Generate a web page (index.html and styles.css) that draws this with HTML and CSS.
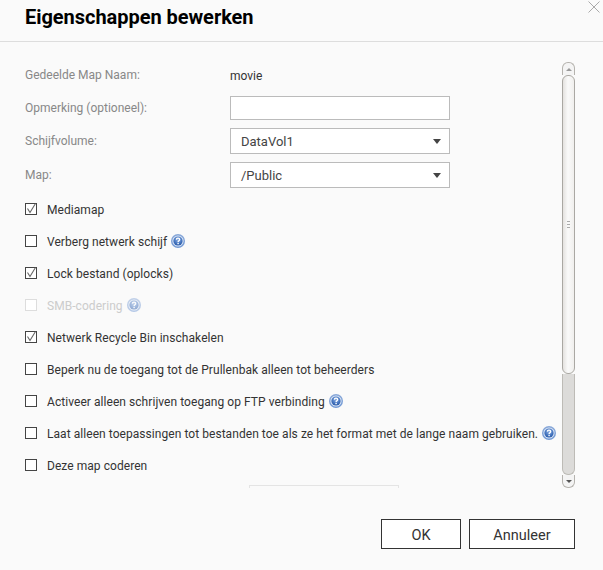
FILE: index.html
```html
<!DOCTYPE html>
<html lang="nl">
<head>
<meta charset="utf-8">
<title>Eigenschappen bewerken</title>
<link rel="stylesheet" href="styles.css">
</head>
<body>
<svg class="defs" width="0" height="0" aria-hidden="true">
  <defs>
    <radialGradient id="helpfill" cx="50%" cy="35%" r="65%">
      <stop offset="0" stop-color="#8fb0e2"/>
      <stop offset="0.7" stop-color="#3f70bc"/>
      <stop offset="1" stop-color="#2c5aa5"/>
    </radialGradient>
    <linearGradient id="helpring" x1="0" y1="0" x2="0" y2="1">
      <stop offset="0" stop-color="#8aa9d8"/>
      <stop offset="1" stop-color="#6f97d4"/>
    </linearGradient>
    <symbol id="help" viewBox="0 0 14 14">
      <circle cx="7" cy="7" r="7" fill="url(#helpring)"/>
      <circle cx="7" cy="7" r="5.6" fill="#dbe6f6"/>
      <circle cx="7" cy="7" r="4.6" fill="url(#helpfill)"/>
      <path d="M5.300 5.600C5.400 4.600 6.100 4.100 7 4.100c1 0 1.700.6 1.700 1.400 0 1.200-1.600 1.300-1.600 2.500" fill="none" stroke="#fff" stroke-width="1.300"/>
      <rect x="6.400" y="8.800" width="1.400" height="1.400" fill="#fff"/>
    </symbol>
    <symbol id="check" viewBox="0 0 12 12">
      <path d="M2.500 5.500 5 9.500 10.500 0.500" fill="none" stroke="#666" stroke-width="1.100"/>
    </symbol>
  </defs>
</svg>
<div class="dialog">
  <header class="head">
    <h1 class="title">Eigenschappen bewerken</h1>
    <svg class="close" width="12" height="12" viewBox="0 0 12 12" aria-label="Sluiten"><path d="M.5.5l11 11M11.500.5l-11 11" stroke="#aaa" stroke-width="1" fill="none"/></svg>
  </header>
  <main class="main">
    <div class="content">
      <div class="fields">
        <div class="field field-text"><span class="label">Gedeelde Map Naam:</span><span class="value">movie</span></div>
        <div class="field"><span class="label">Opmerking (optioneel):</span><span class="control control-input"></span></div>
        <div class="field"><span class="label">Schijfvolume:</span><span class="control control-select">DataVol1<i class="caret"></i></span></div>
        <div class="field"><span class="label">Map:</span><span class="control control-select">/Public<i class="caret"></i></span></div>
      </div>
      <ul class="options">
        <li class="option"><span class="box"><svg width="12" height="12"><use href="#check"/></svg></span><span class="text">Mediamap</span></li>
        <li class="option"><span class="box"></span><span class="text">Verberg netwerk schijf</span><svg class="help" width="14" height="14"><use href="#help"/></svg></li>
        <li class="option"><span class="box"><svg width="12" height="12"><use href="#check"/></svg></span><span class="text">Lock bestand (oplocks)</span></li>
        <li class="option option-off"><span class="box"></span><span class="text">SMB-codering</span><svg class="help" width="14" height="14"><use href="#help"/></svg></li>
        <li class="option"><span class="box"><svg width="12" height="12"><use href="#check"/></svg></span><span class="text">Netwerk Recycle Bin inschakelen</span></li>
        <li class="option"><span class="box"></span><span class="text">Beperk nu de toegang tot de Prullenbak alleen tot beheerders</span></li>
        <li class="option"><span class="box"></span><span class="text">Activeer alleen schrijven toegang op FTP verbinding</span><svg class="help" width="14" height="14"><use href="#help"/></svg></li>
        <li class="option"><span class="box"></span><span class="text">Laat alleen toepassingen tot bestanden toe als ze het format met de lange naam gebruiken.</span><svg class="help" width="14" height="14"><use href="#help"/></svg></li>
        <li class="option"><span class="box"></span><span class="text">Deze map coderen</span></li>
      </ul>
      <div class="peek"></div>
    </div>
    <div class="scrollbar" aria-hidden="true">
      <div class="sb-btn sb-up"><i class="sb-arrow-up"></i></div>
      <div class="sb-thumb"><i class="sb-grip"></i></div>
      <div class="sb-track"></div>
      <div class="sb-btn sb-down"><i class="sb-arrow-down"></i></div>
    </div>
  </main>
  <footer class="foot">
    <button class="btn btn-ok" type="button">OK</button>
    <button class="btn btn-cancel" type="button">Annuleer</button>
  </footer>
</div>
</body>
</html>
```
FILE: styles.css
```css
* { box-sizing: border-box; }
html, body { margin: 0; padding: 0; }
body {
  width: 603px;
  height: 570px;
  overflow: hidden;
  background: #fafafa;
  font-family: Roboto, "Liberation Sans", sans-serif;
  font-size: 12px;
  color: #333;
}
.defs { position: absolute; }
.dialog { display: flex; flex-direction: column; height: 570px; }

.head {
  position: relative;
  height: 42px;
  border-bottom: 1px solid #ddd;
  padding: 4px 0 0 25px;
}
.title {
  margin: 0;
  font-size: 20px;
  line-height: 26px;
  font-weight: 700;
  letter-spacing: -.04px;
  color: #000;
}
.close { position: absolute; top: 1px; right: 3px; }

.main {
  display: flex;
  height: 426px;
  margin-top: 20px;
  padding-left: 25px;
}
.content { width: 537px; }
.fields { display: flex; flex-direction: column; gap: 8px; }
.field { display: flex; align-items: center; min-height: 24px; }
.field-text { height: 26px; }
.label { width: 205px; color: #888; }
.value { color: #333; padding-top: 1px; }
.control {
  display: flex;
  align-items: center;
  justify-content: space-between;
  width: 220px;
  background: #fff;
  border: 1px solid #bbb;
}
.control-input { height: 24px; }
.control-select { height: 26px; padding: 0 8px 0 10px; color: #444; font-size: 13px; }
.caret {
  width: 0;
  height: 0;
  border-left: 4px solid transparent;
  border-right: 4px solid transparent;
  border-top: 5px solid #444;
}

.options { list-style: none; margin: 5px 0 0; padding: 0; }
.option { display: flex; align-items: center; height: 32px; color: #333; }
.text { padding-top: 1px; letter-spacing: .055px; }
.box {
  display: block;
  flex: none;
  width: 12px;
  height: 12px;
  margin-right: 10px;
  background: #fff;
  border: 1px solid #444;
}
.box svg { display: block; margin: -1px 0 0 -1px; }
.help { flex: none; margin-left: 4px; }
.option-off { color: #ccc; }
.option-off .box { border-color: #ddd; }
.option-off .help { opacity: .5; }

.peek {
  width: 150px;
  height: 3px;
  margin: 4px 0 0 224px;
  border: 1px solid #e4e4e4;
  border-bottom: 0;
}

.scrollbar { display: flex; flex-direction: column; width: 13px; }
.sb-btn {
  display: flex;
  align-items: center;
  justify-content: center;
  flex: none;
  height: 13px;
  background: #f4f4f4;
  border: 1px solid #b5b3ae;
}
.sb-up { border-radius: 6px 6px 0 0; border-bottom: 0; }
.sb-down { border-radius: 0 0 6px 6px; border-top: 0; }
.sb-arrow-up, .sb-arrow-down {
  width: 0;
  height: 0;
  border-left: 3px solid transparent;
  border-right: 3px solid transparent;
}
.sb-arrow-up { border-bottom: 3px solid #999; }
.sb-arrow-down { border-top: 3px solid #555; }
.sb-thumb {
  display: flex;
  align-items: center;
  justify-content: center;
  flex: none;
  height: 299px;
  background: linear-gradient(to right, #e4e2df, #fafafa 45%, #f0efed);
  border: 1px solid #aaa8a3;
  border-radius: 6px;
}
.sb-grip {
  width: 3px;
  height: 7px;
  background: repeating-linear-gradient(to bottom, #aaa 0, #aaa 1px, transparent 1px, transparent 3px);
}
.sb-track {
  flex: 1;
  background: #dcdbd9;
  border: 1px solid #bdbbb6;
  border-top: 0;
  border-radius: 0 0 6px 6px;
}

.foot {
  display: flex;
  justify-content: flex-end;
  gap: 8px;
  padding: 31px 28px 0 0;
}
.btn {
  height: 30px;
  padding: 2px 0 0;
  background: #fff;
  border: 1px solid #333;
  border-radius: 0;
  font-family: inherit;
  font-size: 14.500px;
  color: #333;
}
.btn-ok { width: 80px; }
.btn-cancel { width: 106px; }
```
